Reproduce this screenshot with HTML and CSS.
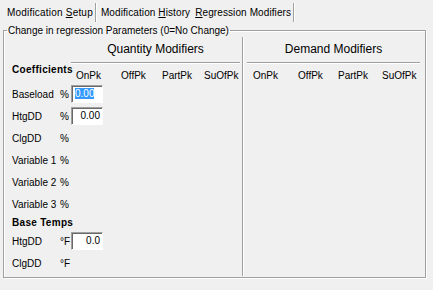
FILE: index.html
```html
<!DOCTYPE html>
<html lang="en">
<head>
<meta charset="UTF-8">
<title>Regression Modifiers</title>
<link rel="stylesheet" href="styles.css">
</head>
<body>
<div class="tabs">
  <div class="tab">Modification <u>S</u>etup</div>
  <div class="tab">Modification <u>H</u>istory</div>
  <div class="tab active"><u>R</u>egression Modifiers</div>
</div>
<fieldset class="group">
  <legend>Change in regression Parameters (0=No Change)</legend>
  <div class="cols">
    <div class="qty">
      <div class="heading"><span>Quantity Modifiers</span></div>
      <div class="grid">
        <div class="row head">
          <div class="label bold">Coefficients</div>
          <div class="unit"></div>
          <div class="c c1">OnPk</div>
          <div class="c c2">OffPk</div>
          <div class="c c3">PartPk</div>
          <div class="c c4">SuOfPk</div>
        </div>
        <div class="row">
          <div class="label">Baseload</div>
          <div class="unit">%</div>
          <div class="c c1"><div class="field left"><span class="sel">0.00</span></div></div>
        </div>
        <div class="row">
          <div class="label">HtgDD</div>
          <div class="unit">%</div>
          <div class="c c1"><div class="field">0.00</div></div>
        </div>
        <div class="row">
          <div class="label">ClgDD</div>
          <div class="unit">%</div>
        </div>
        <div class="row">
          <div class="label">Variable 1</div>
          <div class="unit">%</div>
        </div>
        <div class="row">
          <div class="label">Variable 2</div>
          <div class="unit">%</div>
        </div>
        <div class="row">
          <div class="label">Variable 3</div>
          <div class="unit">%</div>
        </div>
        <div class="row sub">
          <div class="label bold">Base Temps</div>
        </div>
        <div class="row">
          <div class="label">HtgDD</div>
          <div class="unit">°F</div>
          <div class="c c1"><div class="field">0.0</div></div>
        </div>
        <div class="row">
          <div class="label">ClgDD</div>
          <div class="unit">°F</div>
        </div>
      </div>
    </div>
    <div class="dem">
      <div class="heading"><span>Demand Modifiers</span></div>
      <div class="row head">
        <div class="c d1">OnPk</div>
        <div class="c d2">OffPk</div>
        <div class="c d3">PartPk</div>
        <div class="c d4">SuOfPk</div>
      </div>
    </div>
  </div>
</fieldset>
</body>
</html>
```

FILE: styles.css
```css
body {
  margin: 0;
  width: 433px;
  height: 290px;
  background: #f0f0f0;
  font-family: "Liberation Sans", Arial, sans-serif;
  font-size: 10px;
  color: #000;
  overflow: hidden;
}

/* tab strip */
.tabs {
  display: flex;
  height: 24px;
  padding-left: 4px;
  padding-top: 3px;
  box-sizing: border-box;
}

.tab {
  height: 19px;
  line-height: 19px;
  padding: 0 2px 0 3px;
  margin-right: 2px;
  white-space: nowrap;
  letter-spacing: 0.1px;
}

.tab:first-child {
  letter-spacing: 0.2px;
}

.tab:first-child,
.tab.active {
  border-right: 1px solid #a0a0a0;
  box-shadow: 1px 0 0 #fff;
}

.tab:nth-child(2) {
  padding-right: 3px;
}

.tab.active {
  padding: 0 2px 0 0;
}

/* group box */
.group {
  margin: 0 7px 0 3px;
  padding: 0;
  height: 254px;
  box-sizing: border-box;
  border: 1px solid #a0a0a0;
  box-shadow: inset 1px 1px 0 #fff, 1px 1px 0 #fff;
}

.group legend {
  padding: 0 1px;
  margin-left: 3px;
  line-height: 13px;
}

.cols {
  display: flex;
}

.heading {
  height: 21px;
  margin-top: 4px;
  font-size: 12px;
  line-height: 17px;
  text-align: center;
  border-bottom: 1px solid #a0a0a0;
  box-shadow: 0 1px 0 #fff;
}

.qty {
  width: 230px;
  padding-left: 8px;
}

.qty .heading {
  margin: 4px 2px 0 59px;
}

.dem {
  flex: 1;
  height: 239px;
  border-left: 1px solid #a0a0a0;
  box-shadow: inset 1px 0 0 #fff;
}

.dem .heading {
  margin: 4px 5px 0 4px;
}

.row {
  display: flex;
  height: 22px;
  align-items: center;
  white-space: nowrap;
}

.row.head {
  height: 20px;
  align-items: stretch;
}

.row.sub {
  height: 15px;
}

.label {
  width: 48px;
}

.head .label {
  line-height: 14px;
}

.bold {
  font-weight: bold;
  letter-spacing: 0.3px;
}

.unit {
  width: 11px;
}

.c {
  flex: none;
}

.head .c {
  align-self: flex-end;
  line-height: 14px;
  padding-left: 5px;
  box-sizing: border-box;
}

.c1 { width: 45px; }
.c2 { width: 41px; }
.c3 { width: 42px; }
.c4 { width: 38px; }

.dem .row.head {
  margin-left: 10px;
}

.dem .head .c {
  padding-left: 0;
}

.d1 { width: 45px; }
.d2 { width: 40px; }
.d3 { width: 44px; }
.d4 { width: 38px; }

/* edit boxes */
.field {
  width: 32px;
  height: 18px;
  box-sizing: border-box;
  background: #fff;
  border: 1px solid;
  border-color: #a0a0a0 #fff #fff #a0a0a0;
  box-shadow: inset 1px 1px 0 #696969;
  text-align: right;
  padding: 0 2px 0 3px;
  line-height: 16px;
}

.field.left {
  text-align: left;
}

.sel {
  background: #3399ff;
  color: #fff;
}
```
